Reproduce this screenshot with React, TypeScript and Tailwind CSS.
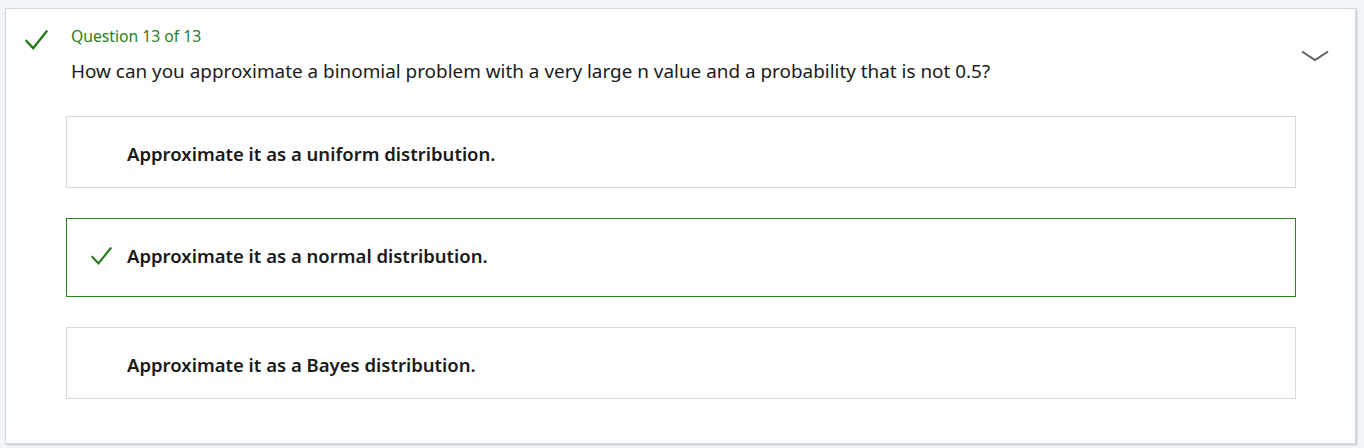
import React from 'react';

const options = [
    { text: 'Approximate it as a uniform distribution.', correct: false },
    { text: 'Approximate it as a normal distribution.', correct: true },
    { text: 'Approximate it as a Bayes distribution.', correct: false },
];

function Check({ className }: { className?: string }) {
    return (
        <svg viewBox="0 0 24 22" className={className} fill="none">
            <path d="M1.5 11.5 L8.5 19 L22.5 1.5" stroke="#1e7a12" strokeWidth="2.4" strokeLinecap="square" />
        </svg>
    );
}

export default function App() {
    return (
        <div className="min-h-[448px] w-full bg-[#f2f5f9] pt-[8px] pl-[5px]" style={{ fontFamily: '"Noto Sans", "Open Sans", sans-serif' }}>
            <div className="relative w-[1351px] h-[436px] bg-white border border-[#d6d9dd] shadow-[1px_1px_2px_rgba(0,0,0,0.2)]">
                {/* Header */}
                <div className="flex pt-[17px]">
                    <div className="w-[65px] pl-[19px] pt-[4px] shrink-0">
                        <Check className="w-[23px] h-[21px]" />
                    </div>
                    <div className="flex flex-col">
                        <span className="text-[15.7px] leading-[20px] text-[#2a7f1e]">Question 13 of 13</span>
                        <span className="mt-[12px] text-[18.9px] leading-[26px] text-[#1a1a1a]">
                            How can you approximate a binomial problem with a very large n value and a probability that is not 0.5?
                        </span>
                    </div>
                </div>

                <svg viewBox="0 0 28 12" className="absolute right-[26px] top-[41px] w-[28px] h-[12px]" fill="none">
                    <path d="M1 1.5 L14 10 L27 1.5" stroke="#606060" strokeWidth="2" />
                </svg>

                {/* Options */}
                <div className="ml-[60px] mt-[32px] w-[1230px] flex flex-col gap-[30px]">
                    {options.map((o) =>
                        o.correct ? (
                            <div key={o.text} className="h-[79px] border border-[#2a8a1e] flex items-center pb-[3px]">
                                <div className="w-[60px] pl-[24px] shrink-0 flex">
                                    <Check className="w-[21px] h-[19px]" />
                                </div>
                                <span className="text-[18.5px] font-semibold text-[#1a1a1a]">{o.text}</span>
                            </div>
                        ) : (
                            <div key={o.text} className="h-[72px] border border-[#d9d9d9] flex items-center pl-[60px] pt-[4px]">
                                <span className="text-[18.5px] font-semibold text-[#1a1a1a]">{o.text}</span>
                            </div>
                        )
                    )}
                </div>
            </div>
        </div>
    );
}
